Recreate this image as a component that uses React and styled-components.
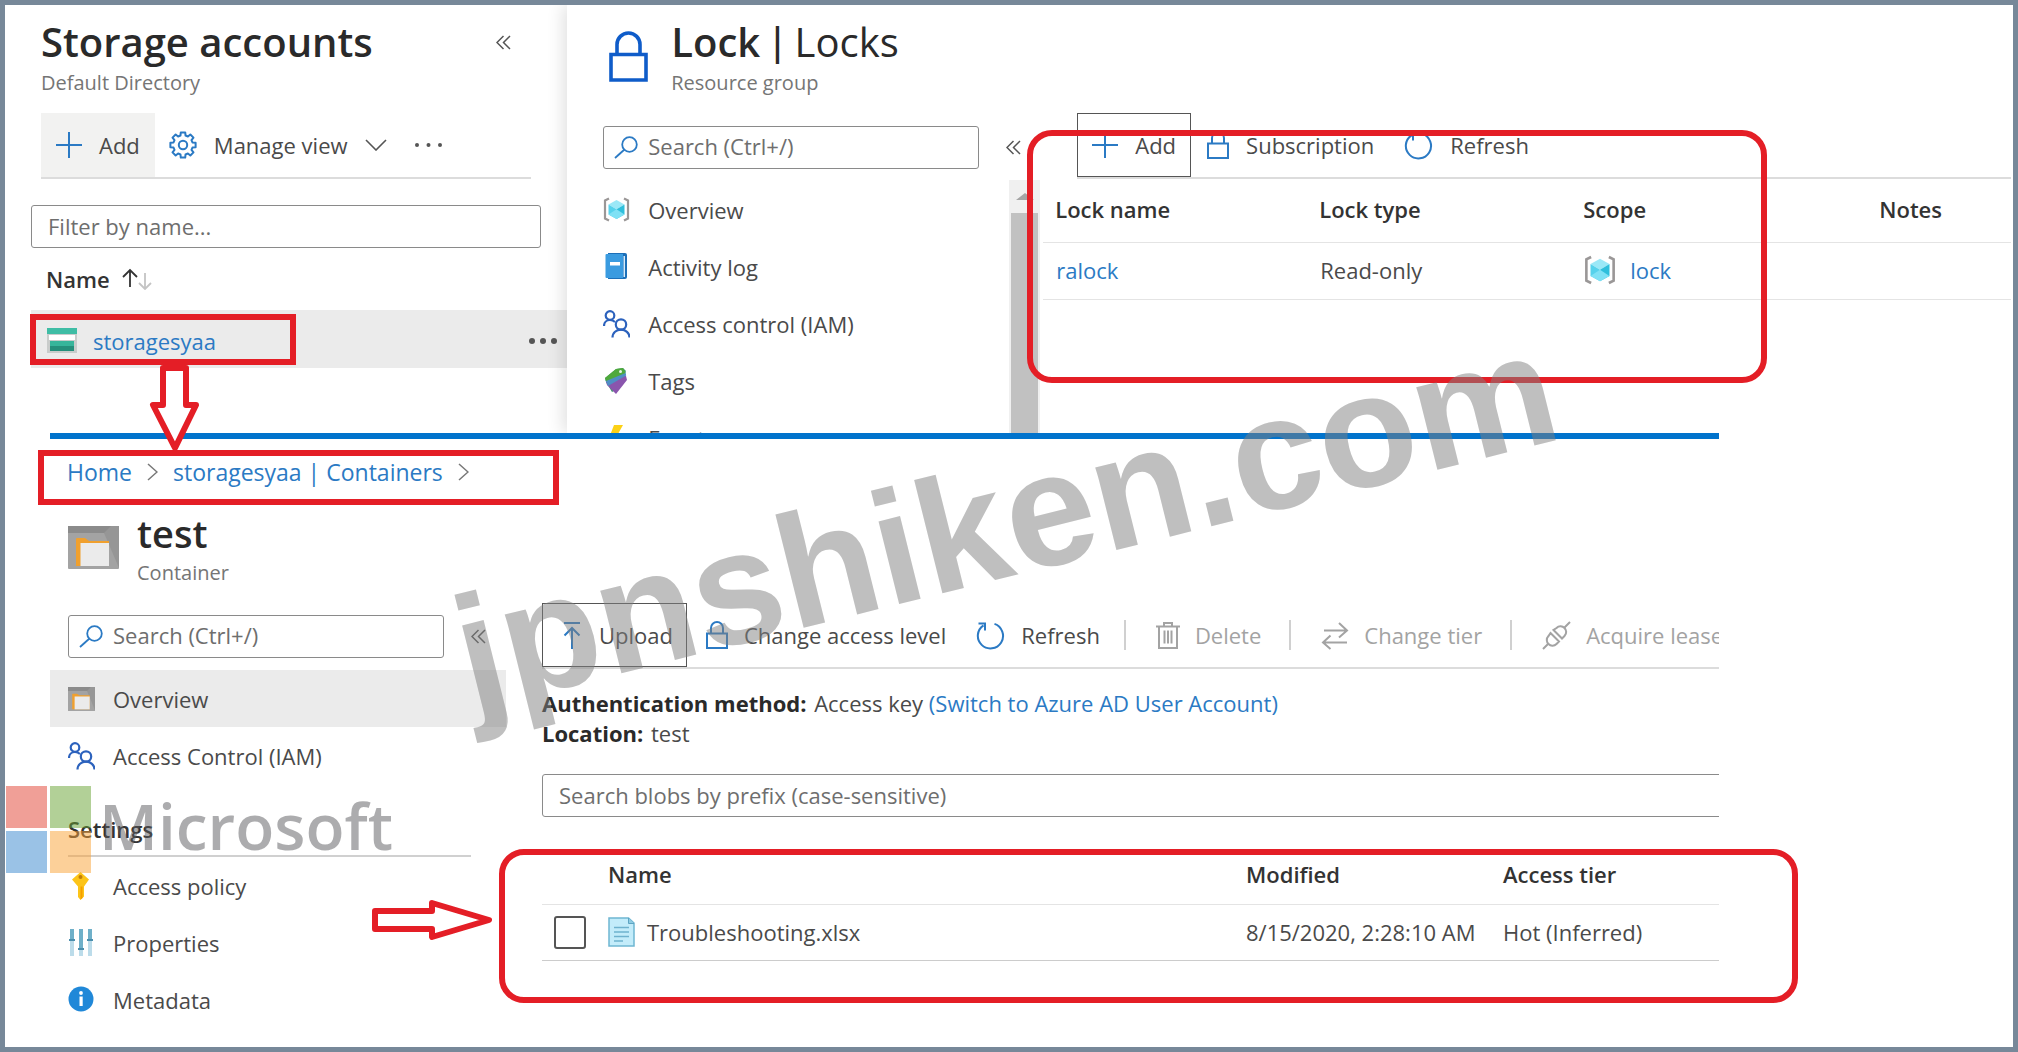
import styled, { createGlobalStyle } from "styled-components";

const GlobalStyle = createGlobalStyle`
  *, *::before, *::after {
    box-sizing: border-box;
  }
  body {
    margin: 0;
    background: #ffffff;
    color: #4a4a4a;
    font-family: "Open Sans", "Noto Sans", sans-serif;
    font-size: 22px;
    line-height: 30px;
  }
  h1, p {
    margin: 0;
  }
  button, input {
    font: inherit;
    color: inherit;
  }
  a {
    color: #2b7ac4;
    text-decoration: none;
  }
  svg {
    display: block;
    flex: none;
  }
`;

/* ---------- icons ---------- */

const gearPath = Array.from({ length: 8 }, (_, i) => {
  const at = (deg, r) => {
    const a = ((i * 45 + deg) * Math.PI) / 180;
    return `${(14 + r * Math.cos(a)).toFixed(2)} ${(14 + r * Math.sin(a)).toFixed(2)}`;
  };
  return `${i ? "L" : "M"}${at(-15, 9.8)} L${at(-10, 12.8)} L${at(10, 12.8)} L${at(15, 9.8)}`;
}).join(" ");

const Svg = ({ w = 28, h = 28, color = "#2b7ac4", sw = 2, box, children }) => (
  <svg
    width={w}
    height={h}
    viewBox={box || `0 0 ${w} ${h}`}
    fill="none"
    stroke={color}
    strokeWidth={sw}
    aria-hidden="true"
  >
    {children}
  </svg>
);

const PlusIcon = () => (
  <Svg w={26} h={26} sw={2}>
    <path d="M13 0v26M0 13h26" />
  </Svg>
);

const GearIcon = () => (
  <Svg>
    <path d={`${gearPath}Z`} strokeLinejoin="round" />
    <circle cx="14" cy="14" r="4.2" />
  </Svg>
);

const ChevronDown = () => (
  <Svg w={22} h={12} color="#555" sw={1.6}>
    <path d="M1 1l10 10L21 1" />
  </Svg>
);

const ChevronRight = () => (
  <Svg w={11} h={18} color="#777" sw={1.5}>
    <path d="M1 1l9 8-9 8" />
  </Svg>
);

const CollapseIcon = () => (
  <Svg w={15} h={15} color="#555" sw={1.5}>
    <path d="M7.5 1L1 7.5 7.5 14M14 1L7.5 7.5 14 14" />
  </Svg>
);

const DotsIcon = ({ r = 2, w = 27, color = "#555" }) => (
  <svg width={w} height="8" viewBox={`0 0 ${w} 8`} fill={color} aria-hidden="true">
    <circle cx={r} cy="4" r={r} />
    <circle cx={w / 2} cy="4" r={r} />
    <circle cx={w - r} cy="4" r={r} />
  </svg>
);

const SortIcon = () => (
  <Svg w={30} h={22} color="#333" sw={1.8}>
    <path d="M8 19V2M1 9l7-7 7 7" />
    <path d="M23 5v16M17 15l6 6 6-6" stroke="#c4c4c4" />
  </Svg>
);

const StorageIcon = () => (
  <svg width="30" height="25" viewBox="0 0 30 25" aria-hidden="true">
    <path d="M0 0h30v6H0z" fill="#3fbda5" />
    <path d="M0 6h30v19H0z" fill="#c9cccb" />
    <path d="M2 7h26v5H2z" fill="#fff" />
    <path d="M3 13h24v5H3z" fill="#37b59b" />
    <path d="M3 18h24v5H3z" fill="#258f7b" />
  </svg>
);

const BigLockIcon = () => (
  <Svg w={39} h={51} color="#0f5cc9" sw={3.6}>
    <path d="M2 23.5h35v25.5H2z" />
    <path d="M8 23V13.5a11.5 11.5 0 0 1 23 0V23" />
  </Svg>
);

const LockIcon = () => (
  <Svg w={22} h={28} sw={2}>
    <path d="M1 12.500h20V27H1z" />
    <path d="M5 12V7a6 6 0 0 1 12 0v5" />
  </Svg>
);

const SearchIcon = () => (
  <Svg w={24} h={23} sw={1.8}>
    <circle cx="15.500" cy="8.500" r="7.300" />
    <path d="M10.500 13.500L1 22" />
  </Svg>
);

const RefreshIcon = () => (
  <Svg w={30} h={29} sw={2}>
    <path d="M19.500 2.900A12.600 12.600 0 1 1 8.500 4.300" />
    <path d="M3.500 2.500l6.500 0v7" />
  </Svg>
);

const UploadIcon = () => (
  <Svg w={18} h={29}>
    <path d="M1 2h16M9 28V7M1.500 14.500L9 7l7.500 7.500" />
  </Svg>
);

const TrashIcon = () => (
  <Svg w={24} h={29} color="#a3a3a3" sw={2}>
    <path d="M0 5.500h24M3 5.500V27h18V5.500M8 5V2h8v3M8.500 9.500v13M12 9.500v13M15.500 9.500v13" />
  </Svg>
);

const SwapIcon = () => (
  <Svg w={28} h={29} color="#a3a3a3">
    <path d="M3 9.500h23M18 2l8 7.500-8 7M26 21.500H2M9.500 14.500l-7.500 7 7.500 6.500" />
  </Svg>
);

const PlugIcon = () => (
  <Svg w={29} h={29} color="#a3a3a3" sw={2}>
    <path d="M1 28l5.500-5.500M22.500 6.500L28 1" />
    <path d="M8.500 12l8.500 8.500-2.500 2.500c-2.500 2.500-6 2-8 0s-2.500-5.500 0-8zM11.500 9l8.500 8.500 2.500-2.500c2.500-2.500 2-6 0-8s-5.500-2.500-8 0z" />
  </Svg>
);

const ResourceGroupIcon = ({ w = 27 }) => (
  <svg width={w} height={w} viewBox="0 0 27 27" aria-hidden="true">
    <path d="M6 2.500L2 4.500v18l4 2M21 2.500l4 2v18l-4 2" fill="none" stroke="#9a9797" strokeWidth="2.200" />
    <path d="M13.500 4l8 4.500-8 4.700-8-4.700z" fill="#9be8f7" />
    <path d="M5.500 8.500l8 4.700V23l-8-4.500z" fill="#56d2ec" />
    <path d="M21.500 8.500l-8 4.700V23l8-4.500z" fill="#2fbfdc" />
    <path d="M5.500 18.500l8-5.300 8 5.300-8 4.500z" fill="#7fe1f5" />
  </svg>
);

const LogIcon = () => (
  <svg width="27" height="27" viewBox="0 0 27 27" aria-hidden="true">
    <path d="M5 0h17a2 2 0 0 1 2 2v22a2 2 0 0 1-2 2H5z" fill="#1c6fb8" />
    <path d="M3.500 1h16.500v24H3.500a1 1 0 0 1-1-1V2a1 1 0 0 1 1-1z" fill="#3a9be0" />
    <path d="M20.500 3h1.500v21h-1.500z" fill="#d5ecfb" />
    <path d="M7 9h10v3.500H7z" fill="#fff" />
  </svg>
);

const PeopleIcon = () => (
  <Svg w={27} h={28} color="#2c62bd" sw={2.200}>
    <circle cx="7" cy="5.500" r="4.300" />
    <circle cx="18" cy="14.500" r="5.200" />
    <path d="M1 16c0-4 3-6 6-6 2 0 3.500.6 5 2M9.500 27.500c0-5 4-7.800 8.500-7.800s8.500 3 8.500 7.800" />
  </Svg>
);

const TagsIcon = () => (
  <svg width="27" height="28" viewBox="0 0 27 28" aria-hidden="true">
    <path d="M2 11L13 2l7-1 3 3-10 19-4 2-6-10z" fill="#3f9a6b" />
    <path d="M3 15l11-9 9 3 1 4-11 14-9-9z" fill="#8a55ad" />
    <path d="M2.500 13L14 4l8.500 1 .7 3.500L5 19z" fill="#4f8ec4" />
    <path d="M2 11L13 2l7-1 2.500 5L3 14z" fill="#4fa93c" />
    <circle cx="17.500" cy="4.500" r="1.500" fill="#e8f5e9" />
  </svg>
);

const BoltIcon = () => (
  <svg width="27" height="28" viewBox="0 0 27 28" aria-hidden="true">
    <path d="M11 1h9l-5 9h6L8 27l4-13H6z" fill="#fcd116" />
  </svg>
);

const ContainerIcon = ({ w = 51, h = 43 }) => (
  <svg width={w} height={h} viewBox="0 0 51 43" preserveAspectRatio="none" aria-hidden="true">
    <rect width="51" height="43" rx="1" fill="#a3a3a3" />
    <path d="M0 0h51v7H0z" fill="#8b8b8b" />
    <path d="M36 7L43 0h8v42z" fill="#969696" />
    <path d="M8 40V13a1 1 0 0 1 1-1h8l4 3h20v25z" fill="#f0a02e" />
    <path d="M12.500 17H41v23H12.500z" fill="#ebebeb" />
  </svg>
);

const OverviewIcon = () => <ContainerIcon w={27} h={24} />;

const KeyIcon = () => (
  <svg width="27" height="28" viewBox="0 0 27 28" aria-hidden="true">
    <path d="M12.500 0l8.500 7.500-5 7v10L12.500 28 10 25V14.500l-6-7z" fill="#fcc419" />
    <path d="M12.500 14.500h2V26l-2 1.500z" fill="#f59f00" />
    <circle cx="12.500" cy="5" r="2" fill="#c07d0a" />
  </svg>
);

const PropertiesIcon = () => (
  <svg width="27" height="27" viewBox="0 0 27 27" aria-hidden="true">
    <path d="M2 0h4v27H2zM11 0h4v27h-4zM20 0h4v27h-4z" fill="#bcdcea" />
    <path d="M2 0h4v11H2zM11 0h4v20h-4zM20 0h4v11h-4z" fill="#6fb0c9" />
    <path d="M1 10h6v2H1zM10 19h6v2h-6zM19 10h6v2h-6z" fill="#4b8fae" />
  </svg>
);

const InfoIcon = () => (
  <svg width="27" height="27" viewBox="0 0 27 27" aria-hidden="true">
    <circle cx="13" cy="13" r="12.500" fill="#2088d8" />
    <circle cx="13" cy="7" r="1.900" fill="#fff" />
    <path d="M11.500 10.500h3.200V20h-3.200z" fill="#fff" />
  </svg>
);

const FileIcon = () => (
  <svg width="27" height="30" viewBox="0 0 27 30" aria-hidden="true">
    <path d="M1 1h19.500L26 6v23H1z" fill="#c3ecfa" stroke="#6fb6d2" strokeWidth="1.500" />
    <path d="M20.500 1v5.500H26" fill="#8fcbe2" stroke="#5ca4c2" />
    <path d="M6 10.500h15M6 15h15M6 19.500h15M6 24h9" stroke="#6fb2ce" strokeWidth="1.600" />
  </svg>
);

/* ---------- page ---------- */

const topNav = [
  { label: "Overview", Icon: ResourceGroupIcon },
  { label: "Activity log", Icon: LogIcon },
  { label: "Access control (IAM)", Icon: PeopleIcon },
  { label: "Tags", Icon: TagsIcon },
  { label: "Events", Icon: BoltIcon },
];

const settingsNav = [
  { label: "Access policy", Icon: KeyIcon },
  { label: "Properties", Icon: PropertiesIcon },
  { label: "Metadata", Icon: InfoIcon },
];

const NavItem = ({ label, Icon, active }) => (
  <NavLink href="#" $active={active}>
    <IconSlot>
      <Icon />
    </IconSlot>
    {label}
  </NavLink>
);

const StorageAccounts = () => (
  <StoragePanel>
    <PanelHead>
      <div>
        <Title>Storage accounts</Title>
        <Subtitle>Default Directory</Subtitle>
      </div>
      <IconButton aria-label="Collapse">
        <CollapseIcon />
      </IconButton>
    </PanelHead>
    <StorageToolbar>
      <ToolButton $filled>
        <PlusIcon />
        Add
      </ToolButton>
      <ToolButton>
        <GearIcon />
        Manage view
        <ChevronDown />
      </ToolButton>
      <IconButton aria-label="More">
        <DotsIcon />
      </IconButton>
    </StorageToolbar>
    <FilterInput aria-label="Filter by name" placeholder="Filter by name..." />
    <SortHeader>
      Name
      <SortIcon />
    </SortHeader>
    <AccountRow>
      <StorageIcon />
      <AccountLink href="#">storagesyaa</AccountLink>
      <IconButton aria-label="Account actions">
        <DotsIcon r={3} w={28} />
      </IconButton>
    </AccountRow>
  </StoragePanel>
);

const Locks = () => (
  <LockBlade>
    <BladeHead>
      <BigLockIcon />
      <div>
        <SplitTitle>
          Lock
          <Bar>|</Bar>
          <Light>Locks</Light>
        </SplitTitle>
        <Subtitle>Resource group</Subtitle>
      </div>
    </BladeHead>
    <BladeBody>
      <LockSide>
        <SearchRow>
          <SearchBox>
            <SearchIcon />
            <SearchInput aria-label="Search" placeholder="Search (Ctrl+/)" />
          </SearchBox>
          <IconButton aria-label="Collapse menu">
            <CollapseIcon />
          </IconButton>
        </SearchRow>
        <ScrollArea>
          <LockNav>
            {topNav.map((item) => (
              <NavItem key={item.label} {...item} />
            ))}
          </LockNav>
          <Scrollbar>
            <ScrollUp />
            <ScrollThumb />
          </Scrollbar>
        </ScrollArea>
      </LockSide>
      <LockMain>
        <LockToolbar>
          <ToolButton $outlined>
            <PlusIcon />
            Add
          </ToolButton>
          <ToolButton>
            <LockIcon />
            Subscription
          </ToolButton>
          <ToolButton>
            <RefreshIcon />
            Refresh
          </ToolButton>
        </LockToolbar>
        <LockTable>
          <thead>
            <tr>
              <th>Lock name</th>
              <th>Lock type</th>
              <th>Scope</th>
              <th>Notes</th>
            </tr>
          </thead>
          <tbody>
            <tr>
              <td>
                <a href="#">ralock</a>
              </td>
              <td>Read-only</td>
              <td>
                <ScopeLink href="#">
                  <ResourceGroupIcon w={32} />
                  lock
                </ScopeLink>
              </td>
              <td />
            </tr>
          </tbody>
        </LockTable>
      </LockMain>
    </BladeBody>
  </LockBlade>
);

const Container = () => (
  <ContainerBlade>
    <Breadcrumb>
      <a href="#">Home</a>
      <ChevronRight />
      <a href="#">storagesyaa | Containers</a>
      <ChevronRight />
    </Breadcrumb>
    <ContainerHead>
      <ContainerIcon />
      <div>
        <SmallTitle>test</SmallTitle>
        <Subtitle>Container</Subtitle>
      </div>
    </ContainerHead>
    <ContainerBody>
      <ContainerSide>
        <ContainerSearch>
          <SearchBox>
            <SearchIcon />
            <SearchInput aria-label="Search" placeholder="Search (Ctrl+/)" />
          </SearchBox>
          <IconButton aria-label="Collapse menu">
            <CollapseIcon />
          </IconButton>
        </ContainerSearch>
        <ContainerNav>
          <NavItem label="Overview" Icon={OverviewIcon} active />
          <NavItem label="Access Control (IAM)" Icon={PeopleIcon} />
          <NavHeading>Settings</NavHeading>
          {settingsNav.map((item) => (
            <NavItem key={item.label} {...item} />
          ))}
        </ContainerNav>
      </ContainerSide>
      <ContainerMain>
        <BlobToolbar>
          <ToolButton $outlined>
            <UploadIcon />
            Upload
          </ToolButton>
          <ToolButton>
            <LockIcon />
            Change access level
          </ToolButton>
          <ToolButton>
            <RefreshIcon />
            Refresh
          </ToolButton>
          <Divider />
          <ToolButton disabled>
            <TrashIcon />
            Delete
          </ToolButton>
          <Divider />
          <ToolButton disabled>
            <SwapIcon />
            Change tier
          </ToolButton>
          <Divider />
          <ToolButton disabled>
            <PlugIcon />
            Acquire lease
          </ToolButton>
        </BlobToolbar>
        <Details>
          <p>
            <strong>Authentication method:</strong> Access key{" "}
            <a href="#">(Switch to Azure AD User Account)</a>
          </p>
          <p>
            <strong>Location:</strong> test
          </p>
        </Details>
        <BlobSearch
          aria-label="Search blobs by prefix"
          placeholder="Search blobs by prefix (case-sensitive)"
        />
        <BlobTable>
          <thead>
            <tr>
              <CheckHead />
              <th>Name</th>
              <ModifiedHead>Modified</ModifiedHead>
              <TierHead>Access tier</TierHead>
            </tr>
          </thead>
          <tbody>
            <tr>
              <td>
                <Checkbox type="checkbox" aria-label="Select Troubleshooting.xlsx" />
              </td>
              <td>
                <FileName>
                  <FileIcon />
                  Troubleshooting.xlsx
                </FileName>
              </td>
              <td>8/15/2020, 2:28:10 AM</td>
              <td>Hot (Inferred)</td>
            </tr>
          </tbody>
        </BlobTable>
      </ContainerMain>
    </ContainerBody>
  </ContainerBlade>
);

const Annotations = () => (
  <>
    <AccountMark />
    <LocksMark />
    <BreadcrumbMark />
    <FileMark />
    <DownArrow width="56" height="92" viewBox="0 0 56 92" aria-hidden="true">
      <path d="M16 4h23v37h10L28 84 6 41h10z" />
    </DownArrow>
    <RightArrow width="124" height="46" viewBox="0 0 124 46" aria-hidden="true">
      <path d="M5 14h57V6l57 17-57 17v-8H5z" />
    </RightArrow>
    <Brand>
      <BrandGrid>
        <BrandTile $color="#e24231" />
        <BrandTile $color="#68a231" />
        <BrandTile $color="#3886ce" />
        <BrandTile $color="#fba236" />
      </BrandGrid>
      Microsoft
    </Brand>
    <Watermark>jpnshiken.com</Watermark>
  </>
);

export default function App() {
  return (
    <Page>
      <GlobalStyle />
      <TopArea>
        <StorageAccounts />
        <Locks />
      </TopArea>
      <Container />
      <Annotations />
    </Page>
  );
}

/* ---------- layout ---------- */

const Page = styled.main`
  position: relative;
  min-height: 100vh;
  overflow: hidden;
  border: 5px solid #778899;
`;

const TopArea = styled.div`
  display: flex;
  height: 428px;
  overflow: hidden;
`;

const StoragePanel = styled.section`
  flex: 0 0 28%;
  padding: 13px 0 0 26px;
`;

const LockBlade = styled.section`
  flex: 1;
  min-width: 0;
  display: flex;
  flex-direction: column;
  padding: 13px 2px 0 36px;
  background: #ffffff;
  box-shadow: -4px 0 16px rgba(0, 0, 0, 0.12);
`;

const ContainerBlade = styled.section`
  margin: 0 294px 0 45px;
  padding-bottom: 6px;
  border-top: 6px solid #0173cc;
  overflow: hidden;
`;

/* ---------- headings ---------- */

const Title = styled.h1`
  font-size: 40px;
  font-weight: 600;
  line-height: 48px;
  color: #2a2a2a;
`;

const SplitTitle = styled(Title)`
  display: flex;
  gap: 12px;
`;

const Bar = styled.span`
  font-family: "Liberation Sans", sans-serif;
  font-weight: 400;
`;

const Light = styled.span`
  font-weight: 400;
`;

const Subtitle = styled.p`
  margin-top: 3px;
  font-size: 20px;
  line-height: 28px;
  color: #757575;
`;

const SmallTitle = styled(Title)`
  font-size: 38px;
  line-height: 40px;

  & + ${Subtitle} {
    margin-top: 6px;
  }
`;

const PanelHead = styled.header`
  display: flex;
  justify-content: space-between;
  align-items: flex-start;
  padding: 0 56px 0 10px;

  button {
    margin-top: 17px;
  }
`;

const BladeHead = styled.header`
  display: flex;
  gap: 23px;
  padding-left: 6px;

  svg {
    margin-top: 13px;
  }
`;

const ContainerHead = styled.header`
  display: flex;
  gap: 18px;
  padding-left: 18px;

  svg {
    margin-top: 13px;
  }
`;

/* ---------- controls ---------- */

const IconButton = styled.button`
  padding: 0;
  border: 0;
  background: none;
`;

const ToolButton = styled.button`
  display: flex;
  align-items: center;
  gap: 17px;
  height: 64px;
  padding: 0 14px;
  white-space: nowrap;
  border: ${(props) => (props.$outlined ? "1px solid #555555" : "0")};
  background: ${(props) => (props.$filled ? "#f2f2f1" : "none")};
  color: ${(props) => (props.disabled ? "#a3a3a3" : "#4a4a4a")};
`;

const Divider = styled.span`
  flex: none;
  width: 2px;
  height: 30px;
  background: #d0d0d0;
`;

const Toolbar = styled.div`
  display: flex;
  align-items: center;
  height: 66px;
  border-bottom: 2px solid #dcdcdc;
`;

const StorageToolbar = styled(Toolbar)`
  margin: 16px 36px 0 10px;

  ${ToolButton}:first-child {
    padding: 0 15px;
  }
  ${IconButton} {
    margin-left: 14px;
  }
`;

const LockToolbar = styled(Toolbar)`
  margin-left: 34px;

  ${ToolButton} + ${ToolButton} {
    padding: 0 13px 0 16px;
  }
`;

const BlobToolbar = styled(Toolbar)`
  ${ToolButton} {
    gap: ${16}px;
    padding: 0 10px 0 19px;
  }
  ${ToolButton}:first-child {
    gap: 18px;
    padding: 0 13px 0 20px;
  }
  ${ToolButton}:disabled {
    gap: 15px;
    padding: 0 14px 0 19px;
  }
  ${Divider} {
    margin: 0 11px 0 14px;
  }
`;

const TextInput = styled.input`
  display: block;
  height: 43px;
  padding: 0 16px 2px;
  border: 1px solid #8a8a8a;
  border-radius: 3px;
  background: #ffffff;

  &::placeholder {
    color: #6e6e6e;
    opacity: 1;
  }
`;

const FilterInput = styled(TextInput)`
  width: calc(100% - 26px);
  margin-top: 26px;
`;

const SearchBox = styled.label`
  display: flex;
  align-items: center;
  gap: 10px;
  width: 376px;
  height: 43px;
  padding: 0 10px;
  border: 1px solid #8a8a8a;
  border-radius: 3px;
`;

const SearchInput = styled.input`
  flex: 1;
  min-width: 0;
  padding: 0 0 3px;
  border: 0;
  outline: 0;
  background: none;

  &::placeholder {
    color: #6e6e6e;
    opacity: 1;
  }
`;

const SearchRow = styled.div`
  display: flex;
  align-items: center;
  gap: 27px;
`;

/* ---------- storage accounts ---------- */

const SortHeader = styled.div`
  display: flex;
  align-items: center;
  gap: 12px;
  height: 62px;
  padding-left: 15px;
  font-weight: 600;
  color: #333333;
`;

const AccountRow = styled.div`
  display: flex;
  align-items: center;
  gap: 16px;
  height: 58px;
  padding: 3px 10px 0 16px;
  background: #ebebeb;
`;

const AccountLink = styled.a`
  flex: 1;
`;

/* ---------- locks ---------- */

const BladeBody = styled.div`
  flex: 1;
  min-height: 0;
  display: flex;
  padding-top: 16px;
`;

const LockSide = styled.div`
  flex: 0 0 437px;
  display: flex;
  flex-direction: column;
  padding-top: 13px;
`;

const ScrollArea = styled.div`
  flex: 1;
  min-height: 0;
  display: flex;
  justify-content: space-between;
  margin-top: 11px;
  overflow: hidden;
`;

const LockNav = styled.nav`
  padding-top: 1px;
`;

const Scrollbar = styled.div`
  width: 31px;
  padding: 13px 2px 0;
  background: #f0f0f0;
`;

const ScrollUp = styled.div`
  width: 18px;
  margin: 0 auto 13px;
  border: 9px solid transparent;
  border-top: 0;
  border-bottom: 7px solid #a5a5a5;
`;

const ScrollThumb = styled.div`
  height: 100%;
  background: #c1c1c1;
`;

const NavLink = styled.a`
  display: flex;
  align-items: center;
  gap: 18px;
  height: 57px;
  white-space: nowrap;
  color: #4a4a4a;
  background: ${(props) => (props.$active ? "#ebebeb" : "none")};
`;

const IconSlot = styled.span`
  flex: none;
  width: 27px;
`;

const LockMain = styled.div`
  flex: 1;
  min-width: 0;
  margin-left: 3px;
`;

const Table = styled.table`
  width: 100%;
  border-collapse: collapse;
  table-layout: fixed;
  text-align: left;

  th {
    font-weight: 600;
    color: #333333;
  }
  th,
  td {
    padding: 0;
    white-space: nowrap;
    border-bottom: 1px solid #e4e4e4;
  }
`;

const LockTable = styled(Table)`
  th {
    width: 264px;
    height: 63px;
    padding: 0 0 3px 12px;
  }
  th:nth-child(3) {
    width: 296px;
  }
  th:last-child {
    width: auto;
  }
  td {
    height: 57px;
    padding: 0 0 1px 13px;
  }
`;

const ScopeLink = styled.a`
  display: flex;
  align-items: center;
  gap: 14px;
`;

/* ---------- container ---------- */

const Breadcrumb = styled.nav`
  display: flex;
  align-items: center;
  gap: 15px;
  height: 74px;
  padding: 0 0 8px 17px;
  font-size: 23px;
`;

const ContainerBody = styled.div`
  display: flex;
  padding-top: 16px;
`;

const ContainerSide = styled.div`
  flex: 0 0 456px;
`;

const ContainerSearch = styled(SearchRow)`
  padding: 12px 0 0 18px;
`;

const ContainerNav = styled.nav`
  margin-top: 12px;

  ${NavLink} {
    padding-left: 18px;
  }
`;

const NavHeading = styled.div`
  height: 73px;
  margin: 0 35px 0 18px;
  padding-top: 30px;
  font-weight: 600;
  color: #333333;
  border-bottom: 2px solid #d0d0d0;
`;

const ContainerMain = styled.div`
  flex: 1;
  min-width: 0;
  margin-left: 36px;
`;

const Details = styled.div`
  padding: 19px 0 26px;

  strong {
    margin-right: 2px;
    font-weight: 700;
    color: #2a2a2a;
  }
`;

const BlobSearch = styled(TextInput)`
  width: calc(100% + 6px);
`;

const BlobTable = styled(Table)`
  margin-top: 27px;

  th {
    height: 60px;
  }
  td {
    height: 56px;
    border-color: #cccccc;
  }
`;

const CheckHead = styled.th`
  width: 66px;
`;

const ModifiedHead = styled.th`
  width: 257px;
`;

const TierHead = styled.th`
  width: 216px;
`;

const Checkbox = styled.input`
  appearance: none;
  display: block;
  width: 32px;
  height: 33px;
  margin: 0 0 0 12px;
  border: 2px solid #555555;
  border-radius: 3px;
`;

const FileName = styled.span`
  display: flex;
  align-items: center;
  gap: 12px;
`;

/* ---------- markup drawn over the page ---------- */

const Mark = styled.div`
  position: absolute;
  border: 6px solid #e41e26;
  pointer-events: none;
`;

const AccountMark = styled(Mark)`
  left: 25px;
  top: 309px;
  width: 266px;
  height: 51px;
`;

const LocksMark = styled(Mark)`
  left: 1022px;
  top: 125px;
  width: 740px;
  height: 253px;
  border-radius: 25px;
`;

const BreadcrumbMark = styled(Mark)`
  left: 33px;
  top: 445px;
  width: 521px;
  height: 55px;
`;

const FileMark = styled(Mark)`
  left: 494px;
  top: 844px;
  width: 1299px;
  height: 154px;
  border-radius: 25px;
`;

const Arrow = styled.svg`
  position: absolute;
  fill: #ffffff;
  stroke: #e41e26;
  stroke-width: 6px;
  stroke-linejoin: round;
`;

const DownArrow = styled(Arrow)`
  left: 142px;
  top: 359px;
`;

const RightArrow = styled(Arrow)`
  left: 365px;
  top: 892px;
`;

const Brand = styled.div`
  position: absolute;
  left: 1px;
  top: 781px;
  display: flex;
  align-items: flex-start;
  gap: 8px;
  font-size: 64px;
  font-weight: 600;
  line-height: 80px;
  color: #5c5c60;
  opacity: 0.5;
`;

const BrandGrid = styled.div`
  display: grid;
  grid-template-columns: 41px 41px;
  gap: 3px;
`;

const BrandTile = styled.span`
  height: 42px;
  background: ${(props) => props.$color};
`;

const Watermark = styled.div`
  position: absolute;
  left: 1000px;
  top: 515px;
  font-family: "Liberation Sans", sans-serif;
  font-size: 161px;
  font-weight: 700;
  line-height: 160px;
  color: rgba(128, 128, 128, 0.5);
  transform: translate(-50%, -50%) rotate(-14deg);
  pointer-events: none;
`;
